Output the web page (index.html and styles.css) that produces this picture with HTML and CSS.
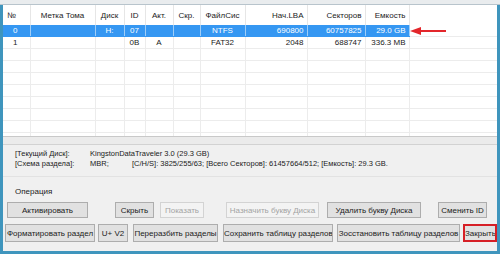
FILE: index.html
```html
<!DOCTYPE html>
<html>
<head>
	<meta charset="utf-8">
	<title>Разделы</title>
	<link rel="stylesheet" href="styles.css">
</head>
<body>
<div class="window">
	<div class="topbar"></div>
	<div class="list">
		<table class="parts">
			<colgroup>
				<col class="c-no"><col class="c-label"><col class="c-disk"><col class="c-id">
				<col class="c-act"><col class="c-hid"><col class="c-fs"><col class="c-lba">
				<col class="c-sec"><col class="c-size"><col class="c-rest">
			</colgroup>
			<thead>
				<tr>
					<th class="left">№</th>
					<th>Метка Тома</th>
					<th>Диск</th>
					<th>ID</th>
					<th>Акт.</th>
					<th>Скр.</th>
					<th>ФайлСис</th>
					<th class="right">Нач.LBA</th>
					<th class="right">Секторов</th>
					<th class="right">Емкость</th>
					<th></th>
				</tr>
			</thead>
			<tbody>
				<tr class="sel">
					<td class="num">0</td><td></td><td>H:</td><td>07</td><td></td><td></td>
					<td>NTFS</td><td class="right">690800</td><td class="right">60757825</td><td class="right">29.0 GB</td><td class="blank"></td>
				</tr>
				<tr>
					<td class="num">1</td><td></td><td></td><td>0B</td><td>A</td><td></td>
					<td>FAT32</td><td class="right">2048</td><td class="right">688747</td><td class="right">336.3 MB</td><td></td>
				</tr>
				<tr><td></td><td></td><td></td><td></td><td></td><td></td><td></td><td></td><td></td><td></td><td></td></tr>
				<tr><td></td><td></td><td></td><td></td><td></td><td></td><td></td><td></td><td></td><td></td><td></td></tr>
				<tr><td></td><td></td><td></td><td></td><td></td><td></td><td></td><td></td><td></td><td></td><td></td></tr>
				<tr><td></td><td></td><td></td><td></td><td></td><td></td><td></td><td></td><td></td><td></td><td></td></tr>
				<tr><td></td><td></td><td></td><td></td><td></td><td></td><td></td><td></td><td></td><td></td><td></td></tr>
				<tr><td></td><td></td><td></td><td></td><td></td><td></td><td></td><td></td><td></td><td></td><td></td></tr>
				<tr><td></td><td></td><td></td><td></td><td></td><td></td><td></td><td></td><td></td><td></td><td></td></tr>
				<tr><td></td><td></td><td></td><td></td><td></td><td></td><td></td><td></td><td></td><td></td><td></td></tr>
			</tbody>
		</table>
		<!-- красная стрелка на выбранный раздел -->
		<svg class="arrow" width="36" height="10" viewBox="0 0 36 10">
			<line x1="8" y1="5" x2="36" y2="5" stroke="#e3262b" stroke-width="2"/>
			<polygon points="0,5 11,1 11,9" fill="#e3262b"/>
		</svg>
	</div>
	<div class="splitter"></div>
	<div class="info">
		<div class="info-row"><span class="key">[Текущий Диск]:</span><span>KingstonDataTraveler 3.0 (29.3 GB)</span></div>
		<div class="info-row"><span class="key">[Схема раздела]:</span><span class="mid">MBR;</span><span>[C/H/S]: 3825/255/63; [Всего Секторов]: 61457664/512; [Емкость]: 29.3 GB.</span></div>
	</div>
	<div class="ops">
		<div class="ops-title">Операция</div>
		<div class="btn-row row1">
			<button class="b-act">Активировать</button>
			<button class="b-hide">Скрыть</button>
			<button class="b-show" disabled>Показать</button>
			<button class="b-assign" disabled>Назначить букву Диска</button>
			<button class="b-del">Удалить букву Диска</button>
			<button class="b-id">Сменить ID</button>
		</div>
		<div class="btn-row row2">
			<button class="b-fmt">Форматировать раздел</button>
			<button class="b-uv">U+ V2</button>
			<button class="b-split">Переразбить разделы</button>
			<button class="b-save">Сохранить таблицу разделов</button>
			<button class="b-rest">Зосстановить таблицу разделов</button>
			<button class="b-close">Закрыть</button>
		</div>
	</div>
</div>
</body>
</html>
```

FILE: styles.css
```css
body{
	margin: 0;
	background-color: #fff;
	font-family: "Liberation Sans", Arial, sans-serif;
	font-size: 8px;
	color: #1b1b1b;
}
.window{
	width: 500px;
	height: 254px;
	box-sizing: border-box;
	border-left: 3px solid #3f95bd;
	border-right: 3px solid #3f95bd;
	border-bottom: 3px solid #3f95bd;
	background-color: #f0f0f0;
	position: relative;
}
.topbar{
	height: 4px;
	margin: 0 -3px;
	background-color: #e9ecee;
	border-bottom: 1px solid #b8c4cc;
}
.list{
	position: relative;
	height: 131px;
	background-color: #fff;
	overflow: hidden;
	border-bottom: 1px solid #c9c9c9;
}
table.parts{
	table-layout: fixed;
	border-collapse: collapse;
	width: 494px;
}
col.c-no{ width: 27px; }
col.c-label{ width: 65px; }
col.c-disk{ width: 29px; }
col.c-id{ width: 21px; }
col.c-act{ width: 28px; }
col.c-hid{ width: 27px; }
col.c-fs{ width: 45px; }
col.c-lba{ width: 62px; }
col.c-sec{ width: 58px; }
col.c-size{ width: 44px; }
col.c-rest{ width: 88px; }
.parts th{
	height: 20px;
	padding: 0;
	font-weight: normal;
	text-align: center;
	border-right: 1px solid #e6e6e6;
	white-space: nowrap;
	overflow: hidden;
}
.parts td{
	height: 11px;
	padding: 0;
	line-height: 11px;
	text-align: center;
	border-right: 1px solid #ececec;
	border-bottom: 1px solid #ececec;
	white-space: nowrap;
	overflow: hidden;
}
.parts th.left{
	text-align: left;
	padding-left: 4px;
}
.parts .right{
	text-align: right;
	padding-right: 3px;
}
.parts td.num{
	text-align: left;
	padding-left: 10px;
}
.parts tr.sel td{
	background-color: #3597f2;
	color: #fff;
	border-right-color: #9fcdf7;
	border-bottom-color: #3597f2;
}
.parts tr.sel td.blank{
	background-color: #fff;
	border-bottom-color: #ececec;
	border-right-color: #ececec;
}
.arrow{
	position: absolute;
	left: 407px;
	top: 21px;
}
.splitter{
	height: 7px;
	background-color: #ebebeb;
	border-bottom: 1px solid #d2d2d2;
}
.info{
	padding: 4px 0 0 12px;
	font-size: 7.5px;
}
.info-row{
	display: flex;
	height: 10px;
	line-height: 10px;
}
.info-row .key{
	width: 75px;
}
.info-row .mid{
	width: 42px;
}
.ops{
	margin-top: 7px;
	border-top: 1px solid #e2e2e2;
	padding: 10px 0 0 2px;
}
.ops-title{
	height: 10px;
	line-height: 10px;
	padding-left: 10px;
}
.btn-row{
	display: flex;
	margin-top: 5px;
}
.row2{
	margin-top: 6px;
}
button{
	font-family: "Liberation Sans", Arial, sans-serif;
	font-size: 8px;
	color: #1b1b1b;
	background-color: #e1e1e1;
	border: 1px solid #adadad;
	border-radius: 0;
	padding: 0;
	margin: 0;
	white-space: nowrap;
	overflow: hidden;
}
button:disabled{
	background-color: #f3f3f3;
	border-color: #d3d3d3;
	color: #a3a3a3;
}
.row1 button{ height: 16px; }
.row2 button{ height: 18px; }
.b-act{ width: 81px; margin-left: 2px; }
.b-hide{ width: 39px; margin-left: 27px; }
.b-show{ width: 44px; margin-left: 6px; }
.b-assign{ width: 93px; margin-left: 22px; }
.b-del{ width: 94px; margin-left: 8px; }
.b-id{ width: 49px; margin-left: 17px; }
.b-fmt{ width: 90px; }
.b-uv{ width: 30px; margin-left: 3px; }
.b-split{ width: 85px; margin-left: 5px; }
.b-save{ width: 110px; margin-left: 5px; }
.b-rest{ width: 123px; margin-left: 4px; }
.b-close{ width: 34px; margin-left: 3px; border: 2px solid #d61f26; }
```
